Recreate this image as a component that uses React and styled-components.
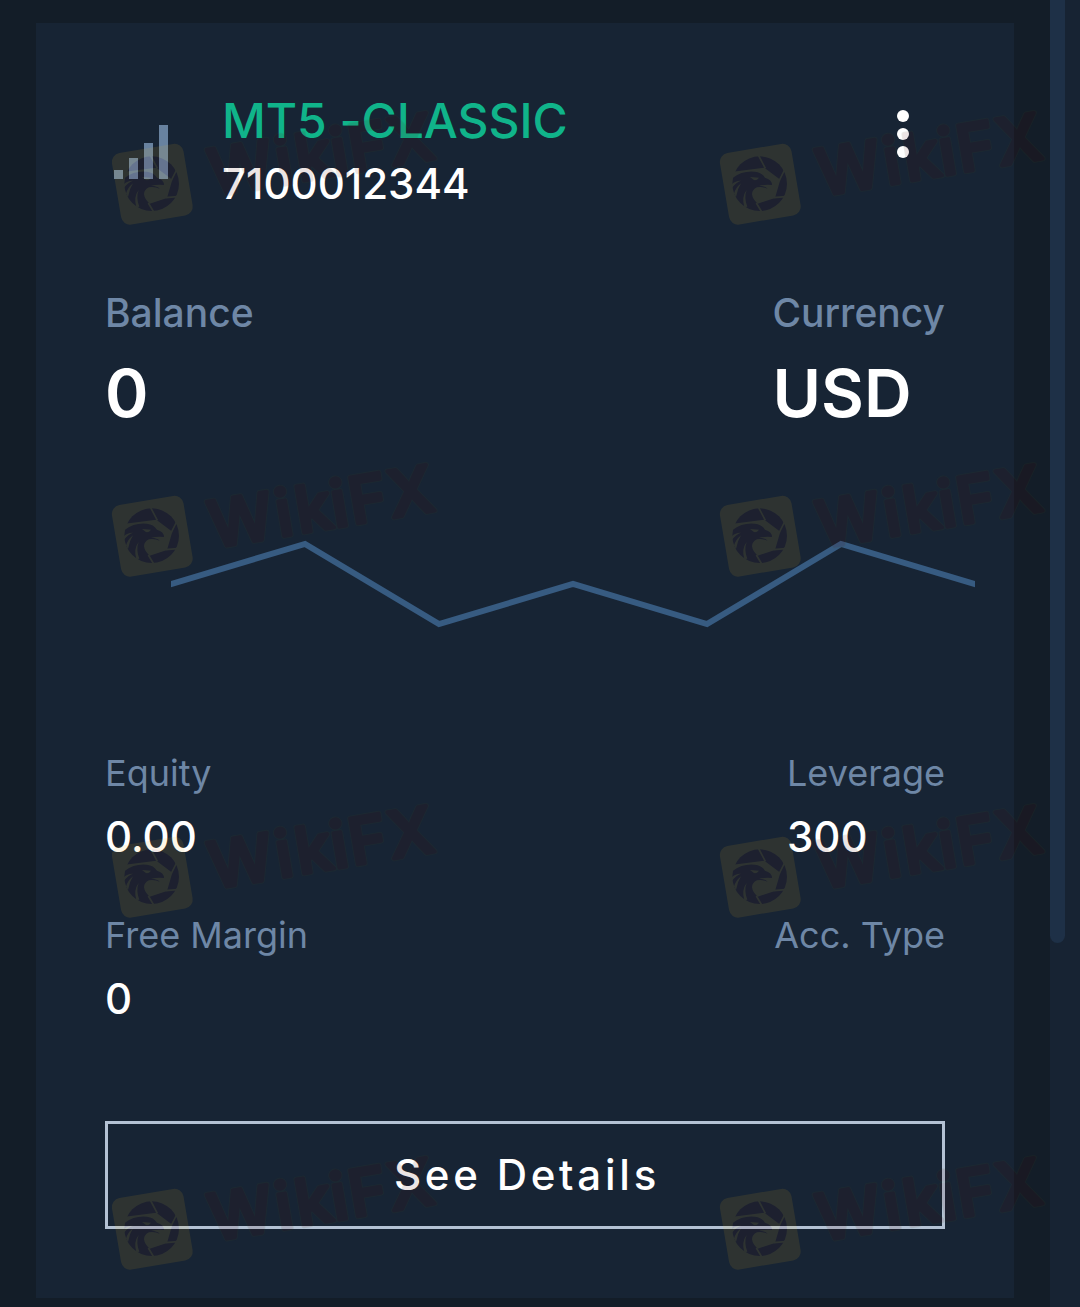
import React from 'react'
import styled, { createGlobalStyle } from 'styled-components';


const chartPoints = [[-8, 47.4], [134, 5], [268, 85], [402, 45], [536, 85], [670, 5], [812, 47.4]];

const signalBars = [9, 21, 36, 54];

const stamps = [184, 536, 877, 1229].flatMap((y) => [[152, y], [760, y]]);

function Stat({label,value,big}) {
    return (
        <StatBox>
            <StatLabel $big={big}>{label}</StatLabel>
            <StatValue $big={big}>{value}</StatValue>
        </StatBox>
    )
}

function Watermark({x,y}) {
    return (
        <g transform={`translate(${x} ${y})`} opacity="0.1">
            <rect x="-36" y="-36" width="72.5" height="72.5" rx="9" fill="#f3ba1e" transform="rotate(-9.6)"/>
            <g transform="scale(.3333) translate(-181 -283)">
                <circle cx="180" cy="282" r="82" fill="#50000a"/>
                <g fill="#f3ba1e">
                    <path d="M94 247 L194 234 L242 270 L226 325 L174 342 Q159 329 157 314 Q157 300 172 293 Q188 290 204 297 Q198 289 178 288 Q196 284 217 286 Q217 270 196 264 Q186 248 166 246 Q128 242 100 264 Z"/>
                    <path d="M151 262 L178 264 L172 270 Q163 274 158 267 Z"/>
                    <path d="M96 284 Q108 272 124 273 Q110 278 97 294 Z"/>
                    <path d="M103 312 Q108 294 124 281 Q113 298 109 322 Z"/>
                    <path d="M134 352 Q125 322 141 301 Q132 324 143 351 Z"/>
                </g>
                <path d="M176 196 L197 236 M239 272 L256 238 M222 324 L266 320 M170 340 L188 370" fill="none" stroke="#f3ba1e" strokeWidth="5"/>
            </g>
            <g transform="rotate(-9.6)">
                <Wordmark x="58 125.5 146 181.5 200 240" y="22" stroke="#46521e" strokeWidth="5.6" fill="#46521e">WikiFX</Wordmark>
                <Wordmark x="58 125.5 146 181.5 200 240" y="22" stroke="#530000" strokeWidth="4" fill="#530000" aria-hidden="true">WikiFX</Wordmark>
            </g>
        </g>
    )
}

function App() {
    return (
        <Page>
            <GlobalStyle/>
            <Content>
                <Card>
                    <CardHeader>
                        <SignalIcon viewBox="0 0 54 54">
                            {signalBars.map((h, i) => (
                                <rect key={h} x={i * 15} y={54 - h} width="9" height={h}/>
                            ))}
                        </SignalIcon>
                        <AccountInfo>
                            <AccountName>MT5 -CLASSIC</AccountName>
                            <AccountNumber>7100012344</AccountNumber>
                        </AccountInfo>
                        <MenuButton aria-label="Menu">
                            <Dot/>
                            <Dot/>
                            <Dot/>
                        </MenuButton>
                    </CardHeader>

                    <StatRow>
                        <Stat big label="Balance" value="0"/>
                        <Stat big label="Currency" value="USD"/>
                    </StatRow>

                    <Chart viewBox="0 0 804 92">
                        <polyline points={chartPoints.join(' ')}/>
                    </Chart>

                    <StatRows>
                        <StatRow>
                            <Stat label="Equity" value="0.00"/>
                            <Stat label="Leverage" value="300"/>
                        </StatRow>
                        <StatRow>
                            <Stat label="Free Margin" value="0"/>
                            <Stat label="Acc. Type"/>
                        </StatRow>
                    </StatRows>

                    <DetailsButton>See Details</DetailsButton>
                </Card>
            </Content>
            <ScrollTrack>
                <ScrollThumb/>
            </ScrollTrack>
            <WatermarkLayer viewBox="0 0 1080 1307">
                {stamps.map(([x, y]) => <Watermark key={`${x}-${y}`} x={x} y={y}/>)}
            </WatermarkLayer>
        </Page>
    )
}

export default App

const GlobalStyle = createGlobalStyle`
body{
    margin:0;
    background:#131d28;
}
*{
    box-sizing:border-box;
}
`;

const Page = styled.div`
position:relative;
display:flex;
width:1080px;
height:1307px;
overflow:hidden;
background:#131d28;
font-family:Inter, sans-serif;
`;
const Content = styled.div`
width:1050px;
padding:23px 36px 9px;
`;
const Card = styled.div`
display:flex;
flex-direction:column;
height:1275px;
padding:67px 69px 69px;
background:#172434;
`;
const CardHeader = styled.div`
display:flex;
height:194px;
`;
const SignalIcon = styled.svg`
width:54px;
height:54px;
margin:35px 54px 0 9px;
fill:#68829f;
`;
const AccountInfo = styled.div`
flex-grow:1;
white-space:nowrap;
`;
const AccountName = styled.div`
color:#10b48a;
font-size:48px;
font-weight:500;
letter-spacing:-.05px;
line-height:61px;
`;
const AccountNumber = styled.div`
color:#fff;
font-size:42px;
font-weight:500;
line-height:65px;
`;
const MenuButton = styled.button`
display:flex;
flex-direction:column;
gap:6px;
height:48px;
margin:20px 36px 0 0;
padding:0;
border:0;
background:none;
cursor:pointer;
`;
const Dot = styled.span`
width:12px;
height:12px;
border-radius:50%;
background:#fff;
`;
const StatRows = styled.div`
display:flex;
flex-direction:column;
gap:36px;
margin-top:115px;
`;
const StatRow = styled.div`
display:flex;
justify-content:space-between;
`;
const StatBox = styled.div`
white-space:nowrap;
`;
const StatLabel = styled.div`
color:#6e87a6;
font-size:${(p) => (p.$big ? 39 : 36)}px;
font-weight:${(p) => (p.$big ? 500 : 400)};
line-height:${(p) => (p.$big ? 58 : 54)}px;
`;
const StatValue = styled.div`
height:${(p) => (p.$big ? 101 : 72)}px;
color:#fff;
font-size:${(p) => (p.$big ? 66 : 42)}px;
font-weight:${(p) => (p.$big ? 600 : 500)};
line-height:${(p) => (p.$big ? 102 : 74)}px;
`;
const Chart = styled.svg`
flex-shrink:0;
width:804px;
height:92px;
margin:96px 0 0 66px;
fill:none;
stroke:#375b81;
stroke-width:6px;
`;
const DetailsButton = styled.button`
height:108px;
margin-top:auto;
padding:0 0 2px 4px;
border:3px solid #b4c2d4;
background:none;
color:#fff;
font-family:inherit;
font-size:42px;
font-weight:500;
letter-spacing:3.75px;
cursor:pointer;
`;
const ScrollTrack = styled.div`
width:30px;
background:#172333;
`;
const ScrollThumb = styled.div`
width:15px;
height:943px;
border-radius:0 0 8px 8px;
background:#1e3047;
`;
const WatermarkLayer = styled.svg`
position:absolute;
top:0;
left:0;
width:1080px;
height:1307px;
pointer-events:none;
`;
const Wordmark = styled.text`
font-size:64px;
font-weight:500;
stroke-linejoin:round;
stroke-linecap:round;
`;
